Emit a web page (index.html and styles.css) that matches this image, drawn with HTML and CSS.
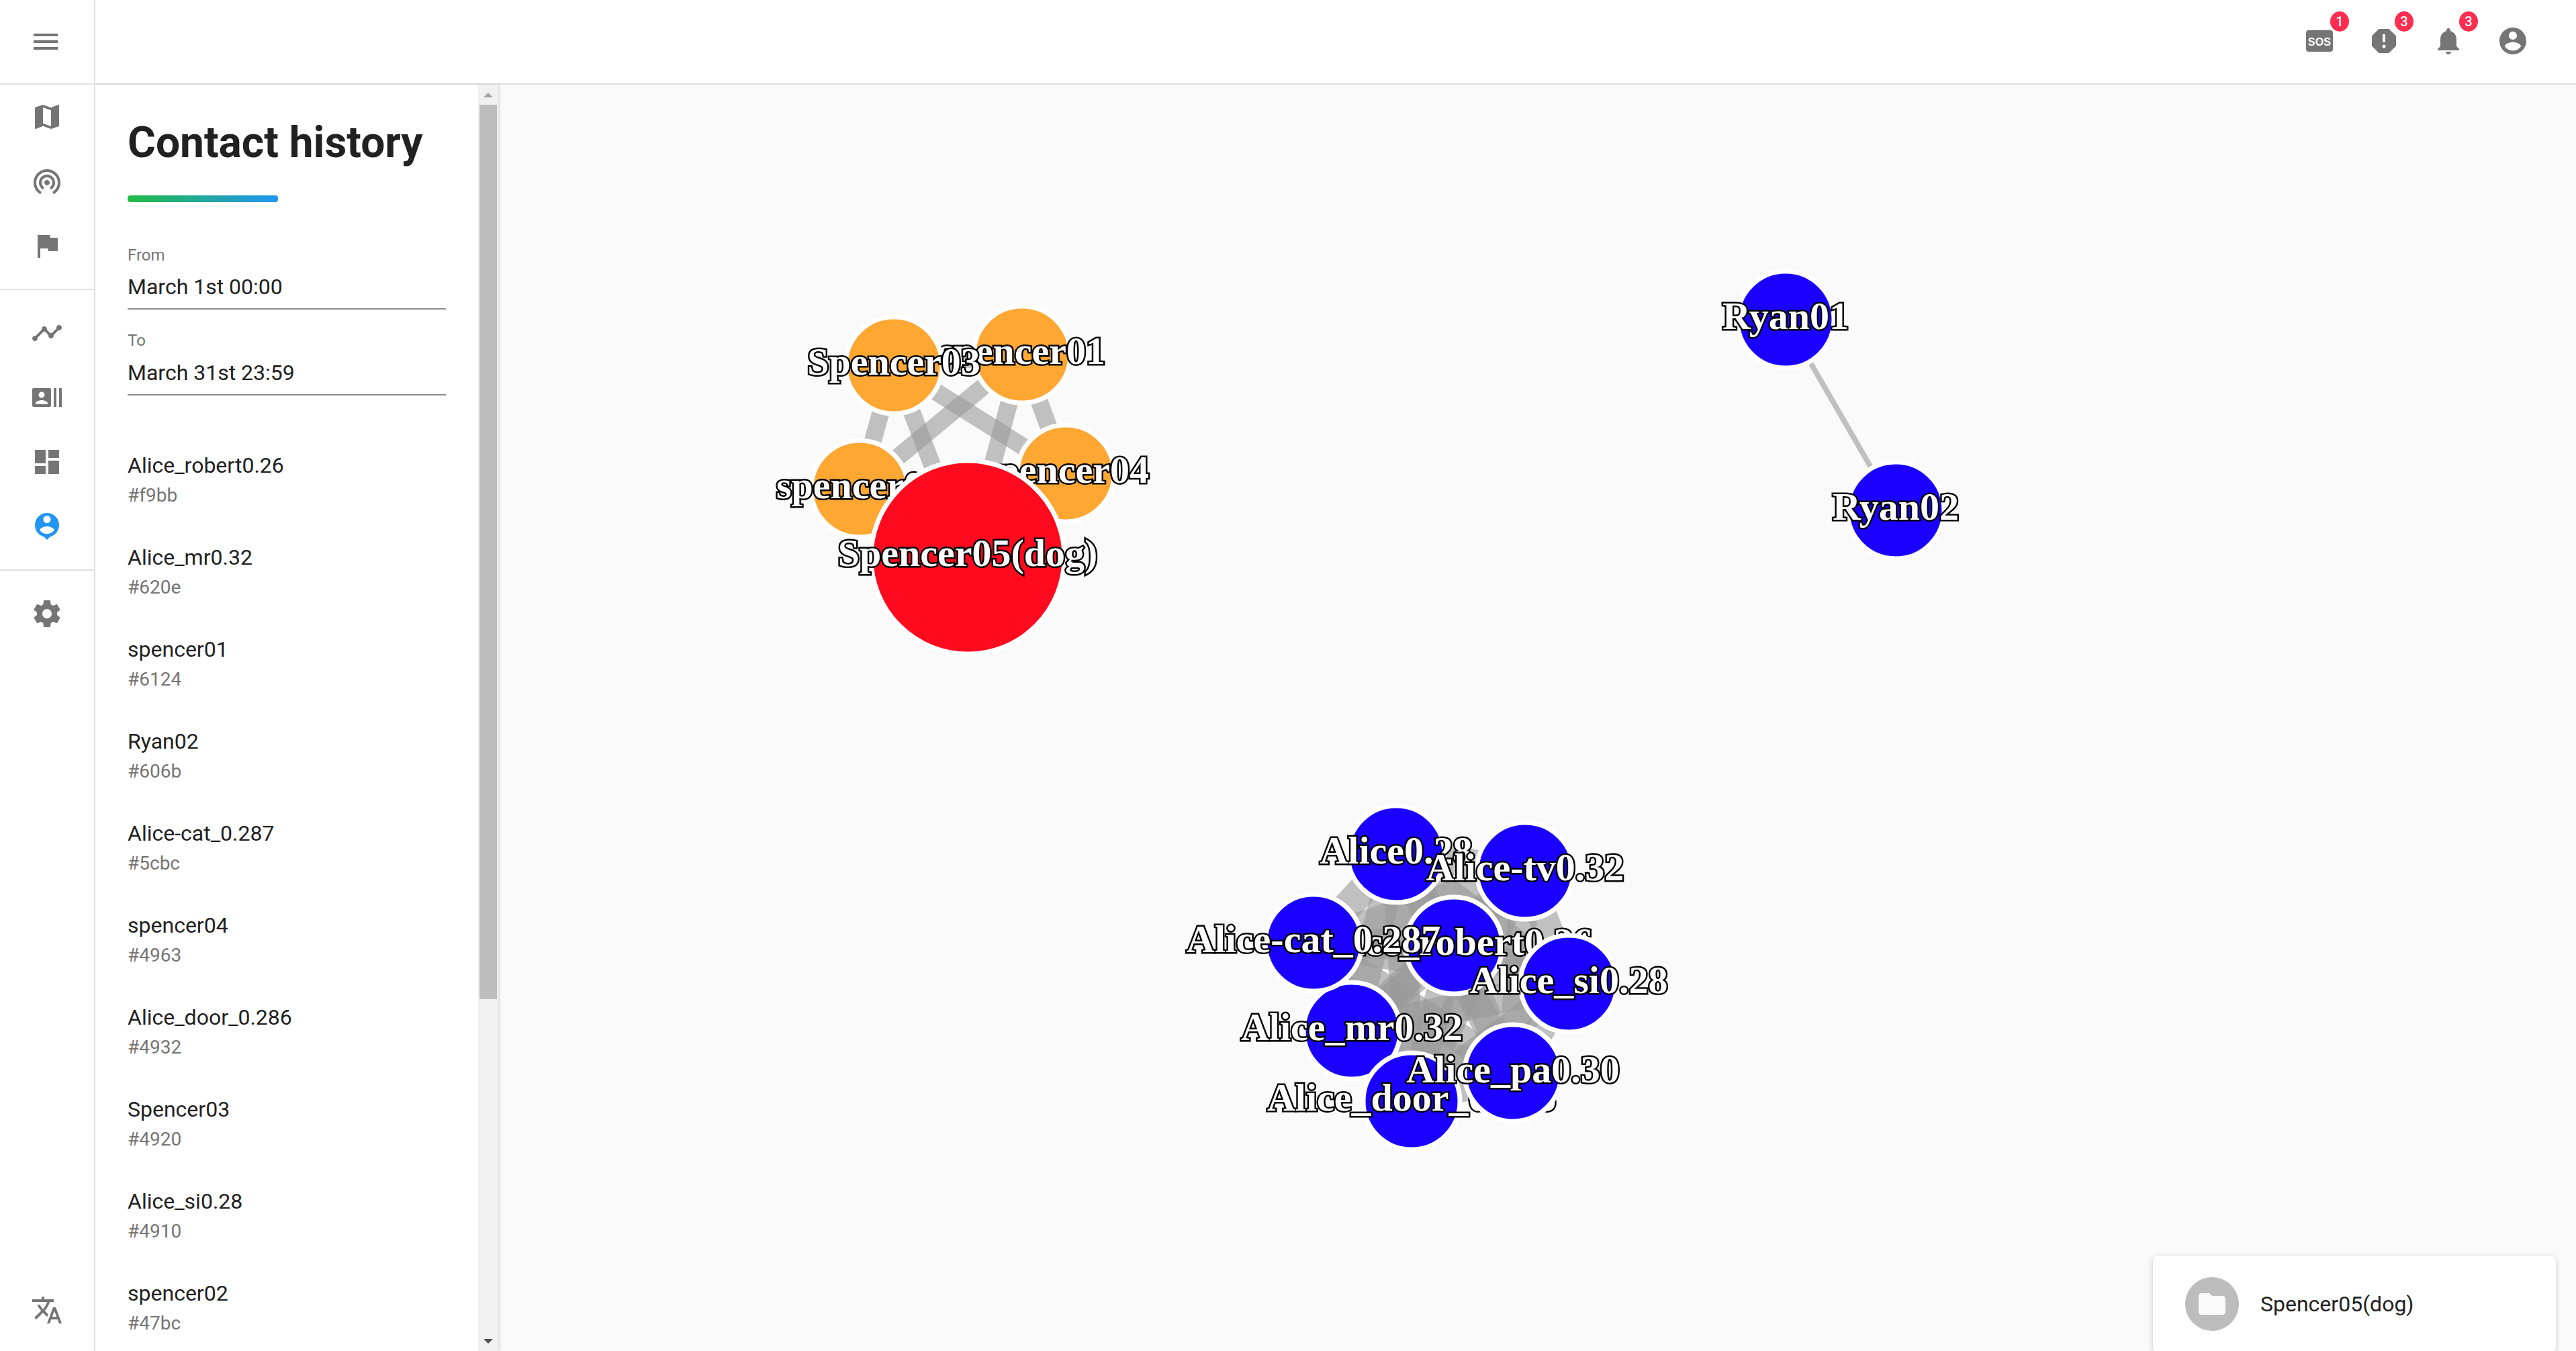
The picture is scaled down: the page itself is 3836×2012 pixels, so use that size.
FILE: index.html
```html
<!DOCTYPE html>
<html lang="en">
<head>
  <meta charset="UTF-8" />
  <title>Contact history</title>
  <link rel="stylesheet" href="styles.css">
</head>
<body>
  <header class="topbar">
    <div class="menu-cell">
      <svg class="icon" viewBox="0 0 24 24"><path d="M3 18h18v-2H3v2zm0-5h18v-2H3v2zm0-7v2h18V6H3z"/></svg>
    </div>
    <div class="actions">
      <div class="action">
        <span class="icon-wrap">
          <svg class="icon" viewBox="0 0 24 24"><rect x="2" y="4" width="20" height="16" rx="2"/><text class="sos-text" x="12" y="15.7">SOS</text></svg>
          <span class="badge">1</span>
        </span>
      </div>
      <div class="action">
        <span class="icon-wrap">
          <svg class="icon" viewBox="0 0 24 24"><path d="M15.73 3H8.27L3 8.27v7.46L8.27 21h7.46L21 15.73V8.27L15.73 3zM12 17.3c-.72 0-1.3-.58-1.3-1.3 0-.72.58-1.3 1.3-1.3.72 0 1.3.58 1.3 1.3 0 .72-.58 1.3-1.3 1.3zm1-4.3h-2V7h2v6z"/></svg>
          <span class="badge">3</span>
        </span>
      </div>
      <div class="action">
        <span class="icon-wrap">
          <svg class="icon" viewBox="0 0 24 24"><path d="M12 22c1.1 0 2-.9 2-2h-4c0 1.1.89 2 2 2zm6-6v-5c0-3.07-1.64-5.64-4.5-6.32V4c0-.83-.67-1.5-1.5-1.5s-1.5.67-1.5 1.5v.68C7.63 5.36 6 7.92 6 11v5l-2 2v1h16v-1l-2-2z"/></svg>
          <span class="badge">3</span>
        </span>
      </div>
      <div class="action">
        <span class="icon-wrap">
          <svg class="icon" viewBox="0 0 24 24"><path d="M12 2C6.48 2 2 6.48 2 12s4.48 10 10 10 10-4.48 10-10S17.52 2 12 2zm0 3c1.66 0 3 1.34 3 3s-1.34 3-3 3-3-1.34-3-3 1.34-3 3-3zm0 14.2c-2.5 0-4.71-1.28-6-3.22.03-1.99 4-3.08 6-3.08 1.99 0 5.97 1.09 6 3.08-1.29 1.94-3.5 3.22-6 3.22z"/></svg>
        </span>
      </div>
    </div>
  </header>

  <div class="main">
    <nav class="rail">
      <div class="rail-group first">
        <div class="rail-item"><svg class="icon" viewBox="0 0 24 24"><path d="M20.5 3l-.16.03L15 5.1 9 3 3.36 4.9c-.21.07-.36.25-.36.48V20.5c0 .28.22.5.5.5l.16-.03L9 18.9l6 2.1 5.64-1.9c.21-.07.36-.25.36-.48V3.5c0-.28-.22-.5-.5-.5zM15 19l-6-2.11V5l6 2.11V19z"/></svg></div>
        <div class="rail-item"><svg class="icon" viewBox="0 0 24 24"><path d="M12 11c-1.1 0-2 .9-2 2s.9 2 2 2 2-.9 2-2-.9-2-2-2zm6 2c0-3.31-2.69-6-6-6s-6 2.69-6 6c0 2.22 1.21 4.15 3 5.19l1-1.74c-1.19-.7-2-1.97-2-3.45 0-2.21 1.79-4 4-4s4 1.79 4 4c0 1.48-.81 2.75-2 3.45l1 1.74c1.79-1.04 3-2.97 3-5.19zM12 3C6.48 3 2 7.48 2 13c0 3.7 2.01 6.92 4.99 8.65l1-1.73C5.61 18.53 4 15.96 4 13c0-4.42 3.58-8 8-8s8 3.58 8 8c0 2.96-1.61 5.53-4 6.92l1 1.73c2.99-1.73 5-4.95 5-8.65 0-5.52-4.48-10-10-10z"/></svg></div>
        <div class="rail-item"><svg class="icon" viewBox="0 0 24 24"><path d="M14.4 6L14 4H5v17h2v-7h5.6l.4 2h7V6z"/></svg></div>
      </div>
      <div class="rail-group">
        <div class="rail-item"><svg class="icon" viewBox="0 0 24 24"><path d="M23 8c0 1.1-.9 2-2 2-.18 0-.35-.02-.51-.07l-3.56 3.55c.05.16.07.34.07.52 0 1.1-.9 2-2 2s-2-.9-2-2c0-.18.02-.36.07-.52l-2.55-2.55c-.16.05-.34.07-.52.07s-.36-.02-.52-.07l-4.55 4.56c.05.16.07.33.07.51 0 1.1-.9 2-2 2s-2-.9-2-2 .9-2 2-2c.18 0 .35.02.51.07l4.56-4.55C8.02 9.36 8 9.18 8 9c0-1.1.9-2 2-2s2 .9 2 2c0 .18-.02.36-.07.52l2.55 2.55c.16-.05.34-.07.52-.07s.36.02.52.07l3.55-3.56C19.02 8.35 19 8.18 19 8c0-1.1.9-2 2-2s2 .9 2 2z"/></svg></div>
        <div class="rail-item"><svg class="icon" viewBox="0 0 24 24"><path d="M21 5v14h2V5h-2zm-4 14h2V5h-2v14zM14 5H2c-.55 0-1 .45-1 1v12c0 .55.45 1 1 1h12c.55 0 1-.45 1-1V6c0-.55-.45-1-1-1zM8 7.75c1.24 0 2.25 1.01 2.25 2.25S9.24 12.25 8 12.25 5.75 11.24 5.75 10 6.76 7.75 8 7.75zM12.5 17h-9v-.75c0-1.5 3-2.25 4.5-2.25s4.5.75 4.5 2.25V17z"/></svg></div>
        <div class="rail-item"><svg class="icon" viewBox="0 0 24 24"><path d="M3 13h8V3H3v10zm0 8h8v-6H3v6zm10 0h8V11h-8v10zm0-18v6h8V3h-8z"/></svg></div>
        <div class="rail-item active"><svg class="icon" viewBox="0 0 24 24"><path d="M12 2a9 9 0 0 0-9 9c0 4.2 2.9 7.800 6.800 8.700L12 22l2.200-2.300c3.900-.9 6.800-4.500 6.800-8.700a9 9 0 0 0-9-9zm0 2c1.500 0 2.800 1.300 2.800 2.800S13.500 9.600 12 9.600 9.200 8.300 9.200 6.800 10.500 4 12 4zm0 13.600c-2.200 0-4.200-1.100-5.400-2.800.1-1.800 3.600-2.800 5.400-2.800s5.300 1 5.400 2.800c-1.200 1.700-3.200 2.800-5.400 2.800z"/></svg></div>
      </div>
      <div class="rail-group">
        <div class="rail-item"><svg class="icon" viewBox="0 0 24 24"><path d="M19.43 12.98c.04-.32.07-.64.07-.98s-.03-.66-.07-.98l2.11-1.65c.19-.15.24-.42.12-.64l-2-3.46c-.12-.22-.39-.3-.61-.22l-2.49 1c-.52-.4-1.08-.73-1.69-.98l-.38-2.65C14.46 2.18 14.25 2 14 2h-4c-.25 0-.46.18-.49.42l-.38 2.65c-.61.25-1.17.59-1.69.98l-2.49-1c-.23-.09-.49 0-.61.22l-2 3.46c-.13.22-.07.49.12.64l2.11 1.65c-.04.32-.07.65-.07.98s.03.66.07.98l-2.11 1.65c-.19.15-.24.42-.12.64l2 3.46c.12.22.39.3.61.22l2.49-1c.52.4 1.08.73 1.69.98l.38 2.65c.03.24.24.42.49.42h4c.25 0 .46-.18.49-.42l.38-2.65c.61-.25 1.17-.59 1.69-.98l2.49 1c.23.09.49 0 .61-.22l2-3.46c.12-.22.07-.49-.12-.64l-2.11-1.65zM12 15.5c-1.93 0-3.5-1.57-3.5-3.5s1.57-3.5 3.5-3.5 3.5 1.57 3.5 3.5-1.57 3.5-3.5 3.5z"/></svg></div>
      </div>
      <div class="rail-bottom">
        <div class="rail-item"><svg class="icon" viewBox="0 0 24 24"><path d="M12.87 15.07l-2.54-2.51.03-.03c1.74-1.94 2.98-4.17 3.71-6.53H17V4h-7V2H8v2H1v1.99h11.17C11.5 7.92 10.44 9.75 9 11.35 8.07 10.32 7.3 9.19 6.69 8h-2c.73 1.63 1.73 3.17 2.98 4.56l-5.09 5.02L4 19l5-5 3.11 3.11.76-2.04zM18.5 10h-2L12 22h2l1.12-3h4.75L21 22h2l-4.5-12zm-2.62 7l1.62-4.33L19.12 17h-3.24z"/></svg></div>
      </div>
    </nav>

    <aside class="panel">
      <div class="panel-body">
        <h1 class="title">Contact history</h1>
        <div class="title-bar"></div>

        <div class="field first-field">
          <div class="field-label">From</div>
          <div class="field-value">March 1st 00:00</div>
        </div>
        <div class="field">
          <div class="field-label">To</div>
          <div class="field-value">March 31st 23:59</div>
        </div>

        <ul class="contacts">
          <li><div class="contact-name">Alice_robert0.26</div><div class="contact-id">#f9bb</div></li>
          <li><div class="contact-name">Alice_mr0.32</div><div class="contact-id">#620e</div></li>
          <li><div class="contact-name">spencer01</div><div class="contact-id">#6124</div></li>
          <li><div class="contact-name">Ryan02</div><div class="contact-id">#606b</div></li>
          <li><div class="contact-name">Alice-cat_0.287</div><div class="contact-id">#5cbc</div></li>
          <li><div class="contact-name">spencer04</div><div class="contact-id">#4963</div></li>
          <li><div class="contact-name">Alice_door_0.286</div><div class="contact-id">#4932</div></li>
          <li><div class="contact-name">Spencer03</div><div class="contact-id">#4920</div></li>
          <li><div class="contact-name">Alice_si0.28</div><div class="contact-id">#4910</div></li>
          <li><div class="contact-name">spencer02</div><div class="contact-id">#47bc</div></li>
        </ul>
      </div>
      <div class="scrollbar">
        <div class="scroll-btn"><span class="arrow-up"></span></div>
        <div class="scroll-thumb"></div>
        <div class="scroll-track"></div>
        <div class="scroll-btn"><span class="arrow-down"></span></div>
      </div>
    </aside>

    <section class="canvas">
      <svg class="graph" viewBox="742 126 3094 1886">
        <g class="edges">
          <line x1="1522" y1="528" x2="1587" y2="705"/>
          <line x1="1522" y1="528" x2="1331" y2="544"/>
          <line x1="1522" y1="528" x2="1280" y2="728"/>
          <line x1="1522" y1="528" x2="1441" y2="830"/>
          <line x1="1331" y1="544" x2="1587" y2="705"/>
          <line x1="1331" y1="544" x2="1280" y2="728"/>
          <line x1="1331" y1="544" x2="1441" y2="830"/>
          <line x1="1587" y1="705" x2="1280" y2="728"/>
          <line x1="1587" y1="705" x2="1441" y2="830"/>
          <line x1="1280" y1="728" x2="1441" y2="830"/>
        </g>
        <g class="edges wide">
          <line x1="2079" y1="1272" x2="2271" y2="1297"/>
          <line x1="2079" y1="1272" x2="2165" y2="1408"/>
          <line x1="2079" y1="1272" x2="1956" y2="1404"/>
          <line x1="2079" y1="1272" x2="2336" y2="1465"/>
          <line x1="2079" y1="1272" x2="2013" y2="1535"/>
          <line x1="2079" y1="1272" x2="2253" y2="1598"/>
          <line x1="2079" y1="1272" x2="2102" y2="1640"/>
          <line x1="2271" y1="1297" x2="2165" y2="1408"/>
          <line x1="2271" y1="1297" x2="1956" y2="1404"/>
          <line x1="2271" y1="1297" x2="2336" y2="1465"/>
          <line x1="2271" y1="1297" x2="2013" y2="1535"/>
          <line x1="2271" y1="1297" x2="2253" y2="1598"/>
          <line x1="2271" y1="1297" x2="2102" y2="1640"/>
          <line x1="2165" y1="1408" x2="1956" y2="1404"/>
          <line x1="2165" y1="1408" x2="2336" y2="1465"/>
          <line x1="2165" y1="1408" x2="2013" y2="1535"/>
          <line x1="2165" y1="1408" x2="2253" y2="1598"/>
          <line x1="2165" y1="1408" x2="2102" y2="1640"/>
          <line x1="1956" y1="1404" x2="2336" y2="1465"/>
          <line x1="1956" y1="1404" x2="2013" y2="1535"/>
          <line x1="1956" y1="1404" x2="2253" y2="1598"/>
          <line x1="1956" y1="1404" x2="2102" y2="1640"/>
          <line x1="2336" y1="1465" x2="2013" y2="1535"/>
          <line x1="2336" y1="1465" x2="2253" y2="1598"/>
          <line x1="2336" y1="1465" x2="2102" y2="1640"/>
          <line x1="2013" y1="1535" x2="2253" y2="1598"/>
          <line x1="2013" y1="1535" x2="2102" y2="1640"/>
          <line x1="2253" y1="1598" x2="2102" y2="1640"/>
        </g>
        <g class="edges thin">
          <line x1="2659" y1="476" x2="2823" y2="760"/>
        </g>

        <g class="node blue"><circle cx="2165" cy="1408" r="72"/><text x="2165" y="1422">Alice_robert0.26</text></g>
        <g class="node blue"><circle cx="2013" cy="1535" r="72"/><text x="2013" y="1549">Alice_mr0.32</text></g>
        <g class="node orange"><circle cx="1522" cy="528" r="72"/><text x="1522" y="542">spencer01</text></g>
        <g class="node blue"><circle cx="2823" cy="760" r="72"/><text x="2823" y="774">Ryan02</text></g>
        <g class="node blue"><circle cx="1956" cy="1404" r="72"/><text x="1956" y="1418">Alice-cat_0.287</text></g>
        <g class="node orange"><circle cx="1587" cy="705" r="72"/><text x="1587" y="719">spencer04</text></g>
        <g class="node blue"><circle cx="2102" cy="1640" r="72"/><text x="2102" y="1654">Alice_door_0.286</text></g>
        <g class="node orange"><circle cx="1331" cy="544" r="72"/><text x="1331" y="558">Spencer03</text></g>
        <g class="node blue"><circle cx="2336" cy="1465" r="72"/><text x="2336" y="1479">Alice_si0.28</text></g>
        <g class="node orange"><circle cx="1280" cy="728" r="72"/><text x="1280" y="742">spencer02</text></g>
        <g class="node blue"><circle cx="2659" cy="476" r="72"/><text x="2659" y="490">Ryan01</text></g>
        <g class="node blue"><circle cx="2079" cy="1272" r="72"/><text x="2079" y="1286">Alice0.28</text></g>
        <g class="node blue"><circle cx="2271" cy="1297" r="72"/><text x="2271" y="1311">Alice-tv0.32</text></g>
        <g class="node blue"><circle cx="2253" cy="1598" r="72"/><text x="2253" y="1612">Alice_pa0.30</text></g>
        <g class="node red"><circle cx="1441" cy="830" r="144"/><text x="1441" y="843">Spencer05(dog)</text></g>
      </svg>

      <div class="selected-card">
        <div class="avatar">
          <svg viewBox="0 0 24 24"><path d="M10 4H4c-1.1 0-1.99.9-1.99 2L2 18c0 1.1.9 2 2 2h16c1.1 0 2-.9 2-2V8c0-1.1-.9-2-2-2h-8l-2-2z"/></svg>
        </div>
        <div class="selected-name">Spencer05(dog)</div>
      </div>
    </section>
  </div>
</body>
</html>
```

FILE: styles.css
```css
html, body {
  margin: 0;
  height: 100%;
  overflow: hidden;
}
body {
  display: flex;
  flex-direction: column;
  background-color: #fafafa;
  color: #212121;
  font-family: Roboto, sans-serif;
}
.icon {
  display: block;
  width: 48px;
  height: 48px;
  fill: #757575;
}

/* top bar */
.topbar {
  display: flex;
  justify-content: space-between;
  height: 124px;
  flex-shrink: 0;
  background-color: #fff;
  border-bottom: 2px solid #e0e0e0;
}
.menu-cell {
  display: flex;
  align-items: center;
  justify-content: center;
  width: 136px;
  padding-right: 4px;
  border-right: 2px solid #e0e0e0;
}
.actions {
  display: flex;
  align-items: center;
  padding-right: 46px;
  padding-bottom: 2px;
}
.action {
  display: flex;
  justify-content: center;
  width: 96px;
}
.icon-wrap {
  position: relative;
  display: block;
}
.sos-text {
  fill: #fff;
  font-family: "Liberation Sans", sans-serif;
  font-size: 8px;
  font-weight: 700;
  letter-spacing: 0.1px;
  text-anchor: middle;
}
.badge {
  position: absolute;
  top: -20px;
  right: -20px;
  width: 28px;
  height: 30px;
  border-radius: 50%;
  background-color: #ff2d4f;
  color: #fafafa;
  font-size: 20px;
  font-weight: 500;
  line-height: 30px;
  text-align: center;
}

.main {
  display: flex;
  flex: 1;
  min-height: 0;
}

/* left rail */
.rail {
  display: flex;
  flex-direction: column;
  width: 140px;
  flex-shrink: 0;
  background-color: #fff;
  border-right: 2px solid #e0e0e0;
}
.rail-group {
  padding: 16px 0;
  border-top: 2px solid #e0e0e0;
}
.rail-group.first {
  padding-top: 0;
  border-top: 0;
}
.rail-bottom {
  margin-top: auto;
  padding-bottom: 13px;
}
.rail-item {
  display: flex;
  align-items: center;
  justify-content: center;
  height: 96px;
}
.rail-item.active .icon {
  fill: #2196f3;
}

/* contacts panel */
.panel {
  position: relative;
  z-index: 1;
  display: flex;
  width: 600px;
  flex-shrink: 0;
  background-color: #fff;
  box-shadow: 2px 0 4px rgba(0, 0, 0, 0.12);
}
.panel-body {
  flex: 1;
  min-width: 0;
  padding: 51px 48px 0;
  overflow: hidden;
}
.title {
  margin: 0;
  font-size: 64px;
  font-weight: 700;
  line-height: 72px;
}
.title-bar {
  width: 224px;
  height: 10px;
  margin-top: 42px;
  border-radius: 4px;
  background: linear-gradient(to right, #22bb44, #2196f3);
}
.field {
  margin-top: 32px;
  padding-bottom: 13px;
  border-bottom: 2px solid #8c8c8c;
}
.field.first-field {
  margin-top: 65px;
}
.first-field .field-value {
  margin-top: 14px;
}
.field-label {
  color: #757575;
  font-size: 24px;
  line-height: 28px;
}
.field-value {
  margin-top: 15px;
  font-size: 32px;
  line-height: 38px;
}
.contacts {
  display: flex;
  flex-direction: column;
  gap: 56px;
  margin: 85px 0 0;
  padding: 0;
  list-style: none;
}
.contact-name {
  font-size: 32px;
  line-height: 38px;
}
.contact-id {
  margin-top: 9px;
  color: #757575;
  font-size: 28px;
  line-height: 34px;
}

/* scrollbar */
.scrollbar {
  display: flex;
  flex-direction: column;
  align-items: center;
  width: 30px;
  flex-shrink: 0;
  background-color: #f1f1f1;
}
.scroll-btn {
  display: flex;
  align-items: center;
  justify-content: center;
  width: 100%;
  height: 30px;
  flex-shrink: 0;
}
.arrow-up, .arrow-down {
  width: 0;
  height: 0;
  border-left: 7px solid transparent;
  border-right: 7px solid transparent;
}
.arrow-up {
  border-bottom: 7px solid #a3a3a3;
}
.arrow-down {
  border-top: 7px solid #505050;
}
.scroll-thumb {
  width: 26px;
  height: 1332px;
  flex-shrink: 0;
  background-color: #bdbdbd;
}
.scroll-track {
  flex: 1;
}

/* graph */
.canvas {
  position: relative;
  flex: 1;
  min-width: 0;
  overflow: hidden;
}
.graph {
  display: block;
  width: 100%;
  height: 100%;
}
.edges line {
  stroke: #999;
  stroke-opacity: 0.6;
  stroke-width: 26px;
}
.edges.wide line {
  stroke-width: 44px;
}
.edges.thin line {
  stroke-width: 8px;
}
.node circle {
  stroke: #fff;
  stroke-width: 7px;
}
.node.blue circle {
  fill: #1a00ff;
}
.node.orange circle {
  fill: #ffa733;
}
.node.red circle {
  fill: #ff0a1e;
}
.node text {
  fill: #fff;
  stroke: #000;
  stroke-width: 5px;
  paint-order: stroke;
  font-family: "Liberation Serif", serif;
  font-size: 58px;
  font-weight: 700;
  text-anchor: middle;
}

/* selected node card */
.selected-card {
  position: absolute;
  right: 30px;
  bottom: -2px;
  display: flex;
  align-items: center;
  gap: 32px;
  width: 504px;
  height: 144px;
  padding: 0 48px;
  border-radius: 8px;
  background-color: #fff;
  box-shadow: 0 2px 8px rgba(0, 0, 0, 0.2);
}
.avatar {
  display: flex;
  align-items: center;
  justify-content: center;
  width: 80px;
  height: 80px;
  flex-shrink: 0;
  border-radius: 50%;
  background-color: #bdbdbd;
}
.avatar svg {
  width: 48px;
  height: 48px;
  fill: #fafafa;
}
.selected-name {
  font-size: 32px;
}
```
